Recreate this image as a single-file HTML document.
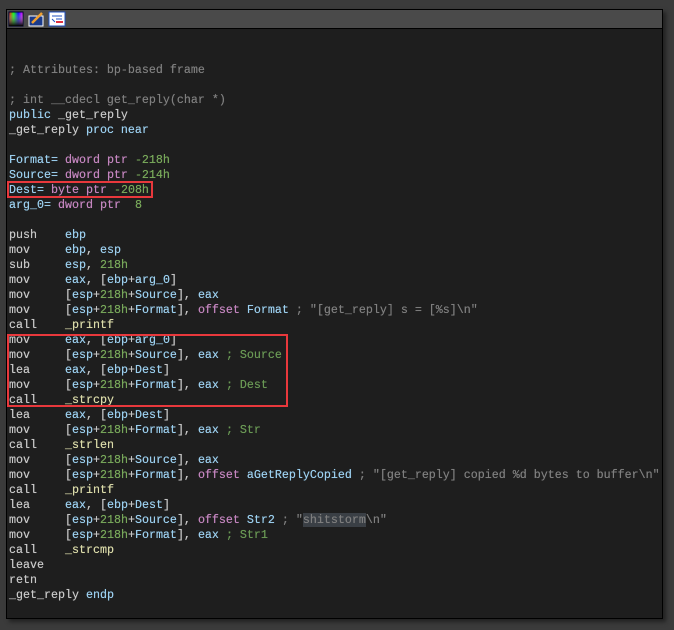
<!DOCTYPE html>
<html><head><style>
body{margin:0;width:674px;height:630px;background:#3b3b3b;overflow:hidden;position:relative;font-family:"Liberation Mono",monospace}
#win{position:absolute;left:6px;top:9px;width:655px;height:608px;border:1px solid #000;background:#1e1e1e;box-shadow:3px 3px 4px #222}
#tb{position:absolute;left:0;top:0;width:655px;height:18px;background:#4a4a4a;border-bottom:1px solid #000}
#code{position:absolute;left:9px;top:63px;font-size:11.67px;line-height:15px;white-space:pre;color:#c8c8c8;text-shadow:0 0 0.4px currentColor}
.c{color:#7f7f7f}.b{color:#9cd0f0}.p{color:#c586c0}.g{color:#78a85a}.y{color:#dcdcaa}.cg{color:#6a9955}
.box{position:absolute;border:2px solid #e8383c}
.hl{background:#3a3f45}
</style></head><body>
<div id="win">
<div id="tb">
<svg width="70" height="18" style="position:absolute;left:1px;top:1px">
<defs><linearGradient id="h" x1="0" x2="1"><stop offset="0" stop-color="#f00"/><stop offset=".33" stop-color="#0f0"/><stop offset=".66" stop-color="#00f"/><stop offset="1" stop-color="#f0f"/></linearGradient>
<linearGradient id="v" x1="0" y1="0" x2="0" y2="1"><stop offset="0" stop-color="#fff" stop-opacity="0"/><stop offset="1" stop-color="#000"/></linearGradient></defs>
<rect x="1" y="1" width="14" height="14" fill="url(#h)" stroke="#000033"/><rect x="1" y="1" width="14" height="14" fill="url(#v)"/>
<rect x="21" y="5" width="14" height="10" fill="#1a3a8a" stroke="#fff"/><path d="M24 12 L34 2" stroke="#f0a030" stroke-width="2.5"/>
<rect x="41" y="1" width="16" height="14" fill="#fff" stroke="#2050c0"/><path d="M44 5h10M44 8l3 3M48 8h6" stroke="#2050c0"/><rect x="48" y="10" width="7" height="2" fill="#e03040"/>
</svg>
</div>
</div>
<div id="code"><span class="c">; Attributes: bp-based frame</span>

<span class="c">; int __cdecl get_reply(char *)</span>
<span class="b">public</span> _get_reply
_get_reply <span class="b">proc near</span>

<span class="b">Format=</span> <span class="p">dword ptr</span> <span class="g">-218h</span>
<span class="b">Source=</span> <span class="p">dword ptr</span> <span class="g">-214h</span>
<span class="b">Dest=</span> <span class="p">byte ptr</span> <span class="g">-208h</span>
<span class="b">arg_0=</span> <span class="p">dword ptr</span>  <span class="g">8</span>

push    <span class="b">ebp</span>
mov     <span class="b">ebp</span>, <span class="b">esp</span>
sub     <span class="b">esp</span>, <span class="g">218h</span>
mov     <span class="b">eax</span>, [<span class="b">ebp</span>+<span class="b">arg_0</span>]
mov     [<span class="b">esp</span>+<span class="g">218h</span>+<span class="b">Source</span>], <span class="b">eax</span>
mov     [<span class="b">esp</span>+<span class="g">218h</span>+<span class="b">Format</span>], <span class="p">offset</span> <span class="b">Format</span> <span class="c">; "[get_reply] s = [%s]\n"</span>
call    <span class="y">_printf</span>
mov     <span class="b">eax</span>, [<span class="b">ebp</span>+<span class="b">arg_0</span>]
mov     [<span class="b">esp</span>+<span class="g">218h</span>+<span class="b">Source</span>], <span class="b">eax</span> <span class="cg">; Source</span>
lea     <span class="b">eax</span>, [<span class="b">ebp</span>+<span class="b">Dest</span>]
mov     [<span class="b">esp</span>+<span class="g">218h</span>+<span class="b">Format</span>], <span class="b">eax</span> <span class="cg">; Dest</span>
call    <span class="y">_strcpy</span>
lea     <span class="b">eax</span>, [<span class="b">ebp</span>+<span class="b">Dest</span>]
mov     [<span class="b">esp</span>+<span class="g">218h</span>+<span class="b">Format</span>], <span class="b">eax</span> <span class="cg">; Str</span>
call    <span class="y">_strlen</span>
mov     [<span class="b">esp</span>+<span class="g">218h</span>+<span class="b">Source</span>], <span class="b">eax</span>
mov     [<span class="b">esp</span>+<span class="g">218h</span>+<span class="b">Format</span>], <span class="p">offset</span> <span class="b">aGetReplyCopied</span> <span class="c">; "[get_reply] copied %d bytes to buffer\n"</span>
call    <span class="y">_printf</span>
lea     <span class="b">eax</span>, [<span class="b">ebp</span>+<span class="b">Dest</span>]
mov     [<span class="b">esp</span>+<span class="g">218h</span>+<span class="b">Source</span>], <span class="p">offset</span> <span class="b">Str2</span> <span class="c">; "<span class="hl">shitstorm</span>\n"</span>
mov     [<span class="b">esp</span>+<span class="g">218h</span>+<span class="b">Format</span>], <span class="b">eax</span> <span class="cg">; Str1</span>
call    <span class="y">_strcmp</span>
leave
retn
_get_reply <span class="b">endp</span></div>
<div class="box" style="left:7px;top:181px;width:142px;height:13px"></div>
<div class="box" style="left:7px;top:334px;width:277px;height:69px"></div>
</body></html>
